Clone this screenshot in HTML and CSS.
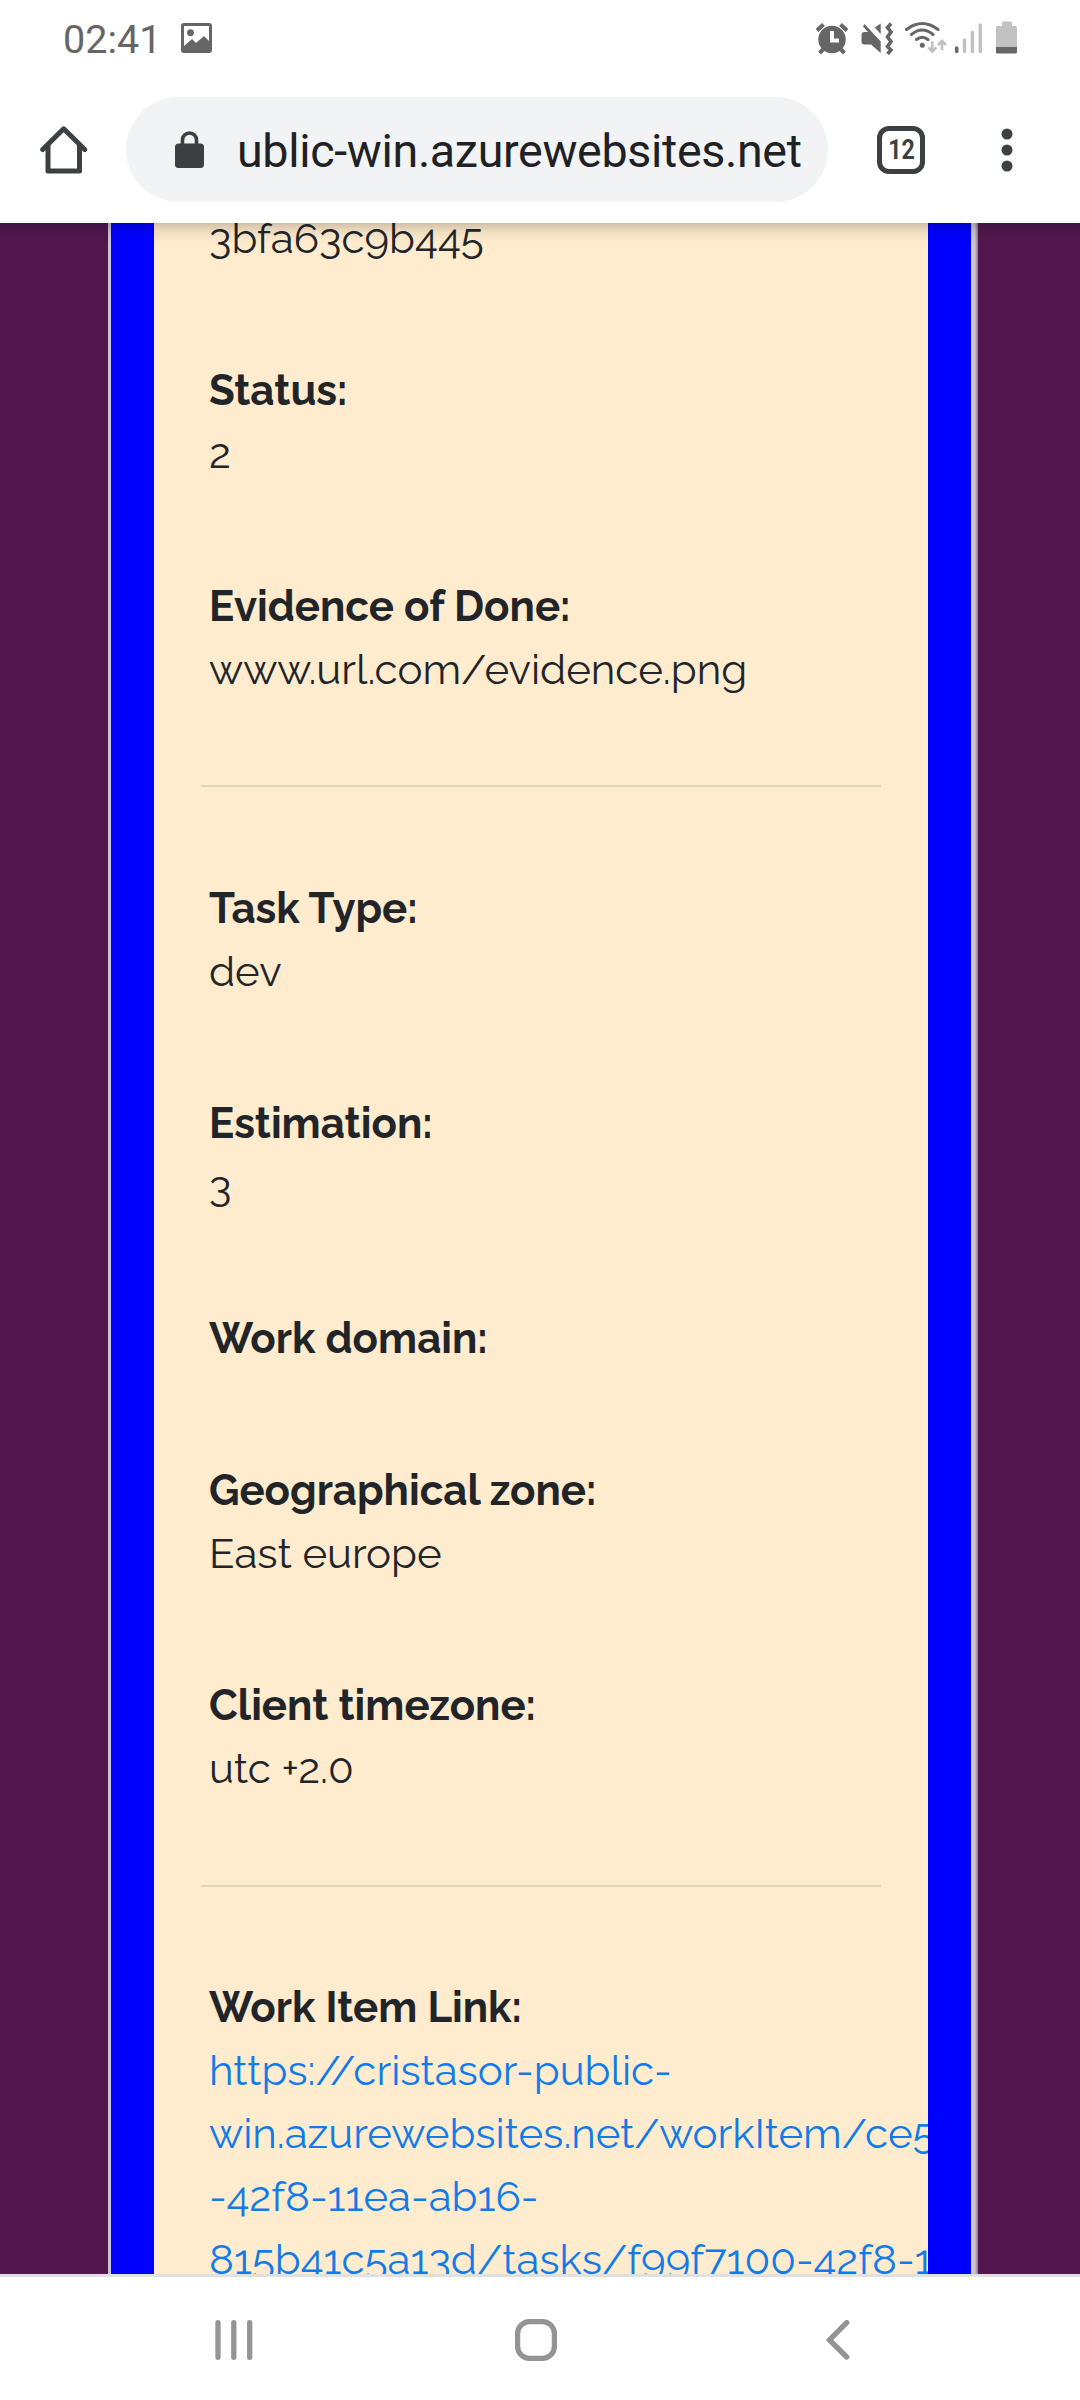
FILE: index.html
```html
<!DOCTYPE html>
<html lang="en">
<head>
<meta charset="utf-8">
<title>Task details</title>
<link rel="stylesheet" href="styles.css">
</head>
<body>
<div class="phone">
  <header class="status">
    <span class="clock">02:41</span>
    <svg class="picture" width="31" height="30" viewBox="0 0 31 30"><path fill="#666" fill-rule="evenodd" d="M3 0h25a3 3 0 0 1 3 3v24a3 3 0 0 1-3 3H3a3 3 0 0 1-3-3V3a3 3 0 0 1 3-3zM3 3v20l8-7 4 4 8-7 5 5V3z"/><circle cx="9.5" cy="9.700" r="3.400" fill="#666"/></svg>
    <svg class="indicators" width="204" height="34" viewBox="814 21 204 34" fill="none">
      <g stroke="#666" stroke-width="4">
        <circle cx="832" cy="39.500" r="13.700" fill="#666" stroke="none"/>
        <path d="M817 30.500l6.500-6M847 30.500l-6.500-6M819.500 53l5-5M844.500 53l-5-5"/>
        <path d="M832 31v9.500h7" stroke="#fff"/>
      </g>
      <path fill="#666" d="M864.500 24l16.200 17.500V53L871 44.500h-6.500a3 3 0 0 1-3-3V35a3 3 0 0 1 3-3h3.500l-5-5.500zM880.700 23.500V34l-6-6.500z"/>
      <path stroke="#666" stroke-width="3.600" d="M891 23.500l-3.500 4 3.500 4.500-3.500 5 3.500 4.500-3.500 5 3.500 3.500-3.500 4"/>
      <g stroke="#666" stroke-width="3" stroke-linecap="round">
        <path d="M906.500 29.500Q922.300 17.500 938 29.500M911.500 34.500Q922.300 25.500 933 34.500M916.500 39.500Q922.300 35 928 39.500"/>
        <circle cx="922.300" cy="45.300" r="2.500" fill="#666" stroke="none"/>
      </g>
      <path stroke="#c2c2c2" stroke-width="2.700" d="M932.300 41.500V51M928.300 47.500l4 4 4-4M942 50V41M938 45l4-4 4 4"/>
      <g stroke-linecap="round" stroke-width="3.500" stroke="#c2c2c2">
        <path stroke="#666" d="M956.700 48v3.500"/><path d="M964.500 40v11.500M972.400 32.500v19M980.300 25v26.500"/>
      </g>
      <path fill="#c2c2c2" d="M1002 26v-3a1.500 1.500 0 0 1 1.500-1.500h7a1.500 1.500 0 0 1 1.500 1.500v3h3.500a1.500 1.500 0 0 1 1.500 1.500V47h-21V27.500a1.500 1.500 0 0 1 1.500-1.500z"/>
      <path fill="#666" d="M996 47h21v5a1.500 1.500 0 0 1-1.500 1.500h-18a1.500 1.500 0 0 1-1.500-1.500z"/>
    </svg>
  </header>
  <div class="toolbar">
    <svg class="home" width="48" height="48" viewBox="0 0 48 48" fill="none" stroke="#3c4043" stroke-width="5"><path stroke-linecap="round" stroke-linejoin="round" d="M2.700 23.500L23.700 2.800l21 20.700"/><path stroke-linejoin="round" d="M8 19v26h31.500V19"/></svg>
    <div class="omnibox">
      <svg width="29" height="37" viewBox="0 0 29 37"><rect y="12.500" width="29" height="24.500" rx="3.500" fill="#3c4043"/><path d="M7.500 14V9a7 7 0 0 1 14 0v5" fill="none" stroke="#3c4043" stroke-width="3.600"/></svg>
      <span class="url">ublic-win.azurewebsites.net</span>
    </div>
    <div class="tabs"><span>12</span></div>
    <svg class="menu" width="12" height="44" viewBox="0 0 12 44" fill="#3c4043"><circle cx="6" cy="6" r="5.500"/><circle cx="6" cy="22" r="5.500"/><circle cx="6" cy="38" r="5.500"/></svg>
  </div>
  <main class="page">
    <div class="panel">
      <article class="card">
        <section class="group">
          <p>3bfa63c9b445</p>
          <p><b>Status:</b>2</p>
          <p><b>Evidence of Done:</b>www.url.com/evidence.png</p>
        </section>
        <section class="group">
          <p><b>Task Type:</b>dev</p>
          <p><b>Estimation:</b>3</p>
          <p><b>Work domain:</b></p>
          <p><b>Geographical zone:</b>East europe</p>
          <p><b>Client timezone:</b>utc +2.0</p>
        </section>
        <section class="group">
          <p><b>Work Item Link:</b><a>https://cristasor-public-<br>win.azurewebsites.net/workItem/ce5<br>-42f8-11ea-ab16-<br>815b41c5a13d/tasks/f99f7100-42f8-11</a></p>
        </section>
      </article>
    </div>
  </main>
  <nav class="navbar">
    <svg class="recents" width="38" height="40" viewBox="0 0 38 40" stroke="#949494" stroke-width="5.300" stroke-linecap="round"><path d="M3 2.700v34.600M18.800 2.700v34.600M34.700 2.700v34.600"/></svg>
    <svg class="homekey" width="42" height="42" viewBox="0 0 42 42"><rect x="2.600" y="2.600" width="36.800" height="36.800" rx="12" fill="none" stroke="#949494" stroke-width="5.200"/></svg>
    <svg class="back" width="24" height="40" viewBox="0 0 24 40" fill="none" stroke="#949494" stroke-width="5.300" stroke-linecap="round"><path d="M20.700 2.700L3.500 20l17.200 17"/></svg>
  </nav>
</div>
</body>
</html>
```
FILE: styles.css
```css
* { box-sizing: border-box; }
body { margin: 0; background: #fff; }
svg { display: block; flex: none; }

.phone {
  display: flex;
  flex-direction: column;
  width: 1080px;
  height: 2400px;
  overflow: hidden;
  font-family: Roboto, sans-serif;
}

.status {
  display: flex;
  align-items: flex-start;
  height: 80px;
  padding: 0 62px 0 63px;
}
.clock { width: 117px; padding-top: 16px; font-size: 39.5px; line-height: 47px; color: #666; }
.picture { margin: 23px 0 0 1px; }
.indicators { margin: 21px 0 0 auto; }

.toolbar {
  display: flex;
  align-items: center;
  height: 143px;
  padding: 0 67px 4px 40px;
}
.omnibox {
  display: flex;
  align-items: center;
  width: 702px;
  height: 105px;
  margin: 0 0 0 38px;
  padding-left: 49px;
  border-radius: 53px;
  background: #f1f3f4;
}
.omnibox svg { margin-top: -1px; }
.url { margin-left: 33px; padding-top: 3px; font-size: 46.6px; letter-spacing: -0.33px; line-height: 55px; color: #202124; white-space: nowrap; }
.tabs {
  display: flex;
  align-items: center;
  justify-content: center;
  width: 48px;
  height: 48px;
  margin: 0 0 0 49px;
  border: 5px solid #3c4043;
  border-radius: 12px;
  font-size: 27px;
  font-weight: 700;
  color: #3c4043;
}
.tabs span { transform: scaleX(.86); }
.home { margin-top: 1px; }
.menu { margin: 0 0 0 auto; }

.page {
  position: relative;
  height: 2051px;
  overflow: hidden;
  padding: 0 102px 0 108px;
  background: #51174e;
}
.page::before {
  content: "";
  position: absolute;
  inset: 0 0 auto;
  height: 20px;
  background: linear-gradient(rgba(0, 0, 0, .18), rgba(0, 0, 0, .06) 45%, transparent);
}
.panel {
  height: 100%;
  padding: 0 7px 0 3px;
  background: linear-gradient(90deg, #cbc3dc 50%, #cbc7cd 99.6%, #8f7391);
}
.card {
  height: 100%;
  overflow: hidden;
  padding: 0 47px;
  border: solid #00f;
  border-width: 0 43px;
  background: #ffebcd;
  font: 42px/63px Raleway, Lato, sans-serif;
  color: #212529;
}
.group {
  display: flex;
  flex-direction: column;
  gap: 89.2px;
  padding: 90px 8px 84.9px;
}
.group:first-child { gap: 89.7px; margin-top: -106.3px; padding-bottom: 83.6px; }
.group:last-child { padding-top: 89px; }
.group + .group { border-top: 2px solid #e5d3b8; }
p { display: flex; flex-direction: column; margin: 0; white-space: nowrap; }
b { font-weight: 700; }
a { color: #117be9; }

.navbar {
  display: flex;
  align-items: flex-start;
  height: 126px;
  padding: 42px 230px 0 215px;
  border-top: 3px solid #e0e0e0;
}
.recents { margin-top: 1px; }
.homekey { margin-left: 262px; }
.back { margin: 1px 0 0 auto; }
```
